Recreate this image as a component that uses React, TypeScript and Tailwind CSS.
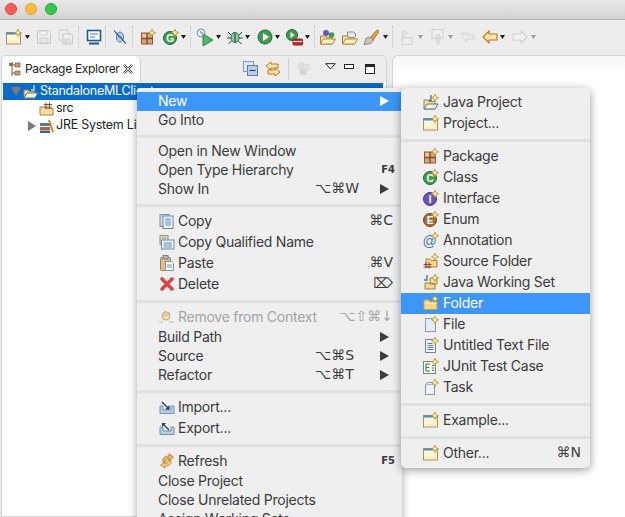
import type { ReactNode } from "react";

const Svg = ({ children, w = 16, h = 16 }: { children: ReactNode; w?: number; h?: number }) => (
  <svg width={w} height={h} viewBox={`0 0 ${w} ${h}`} className="shrink-0 block">
    {children}
  </svg>
);

// little yellow "new" sparkle in the top right of most icons
const Spark = ({ x = 12, y = 3.8 }: { x?: number; y?: number }) => (
  <path
    d={`M${x} ${y - 3.6}l1.1 2.5 2.5 1.1-2.5 1.1-1.1 2.5-1.1-2.5-2.5-1.1 2.5-1.1z`}
    fill="#fff0a8"
    stroke="#b98a24"
    strokeWidth="0.8"
  />
);

const WindowNew = () => (
  <Svg>
    <rect x="0.5" y="3.5" width="14" height="11.5" fill="#fdf6d6" stroke="#a9925c" />
    <rect x="0.5" y="3.5" width="14" height="2" fill="#4f8cc4" />
    <path d="M3 13h10V7" stroke="#f3e4a2" fill="none" />
    <Spark />
  </Svg>
);
const JavaProject = () => (
  <Svg>
    <path d="M1 15V6h4l1 1.5h6V15z" fill="#f8dfa0" stroke="#a9803a" />
    <path d="M1 15l3-5h11l-3 5z" fill="#fdf1c8" stroke="#3f78b5" />
    <path d="M8 1v5.5H5.5" fill="none" stroke="#3f78b5" strokeWidth="1.4" />
    <Spark />
  </Svg>
);
const PackageIcon = () => (
  <Svg>
    <rect x="1.5" y="4" width="11" height="11" fill="#d9a679" stroke="#8f5b3a" />
    <path d="M7 4v11M1.5 9.5h11" stroke="#7d4a2b" strokeWidth="1.3" />
    <path d="M2.5 5h3.5v3.5H2.5z" fill="#eccba6" />
    <Spark />
  </Svg>
);
const Circle = ({ c, s, l }: { c: string; s: string; l: string }) => (
  <Svg>
    <circle cx="7" cy="9" r="6.5" fill={c} stroke={s} />
    <text x="7" y="12.6" textAnchor="middle" fontSize="10" fontWeight="700" fill="#fff" fontFamily="Liberation Sans, sans-serif">
      {l}
    </text>
    <Spark />
  </Svg>
);
const Annotation = () => (
  <Svg>
    <text x="6.5" y="13.5" textAnchor="middle" fontSize="14" fill="#3d78b2" fontFamily="Liberation Sans, sans-serif">
      @
    </text>
    <Spark />
  </Svg>
);
const SourceFolder = () => (
  <Svg>
    <path d="M3 14V6h4l1 1.5h6V14z" fill="#f5d590" stroke="#a9803a" />
    <path d="M0.5 11.5h8M0.5 14h8M3 9v6.5M6 9v6.5" stroke="#8f4a3a" fill="none" />
    <Spark />
  </Svg>
);
const WorkingSet = () => (
  <Svg>
    <path d="M4 1v5H1" fill="none" stroke="#3f78b5" strokeWidth="1.4" />
    <path d="M7 9V4h4l1 1h2v5z" fill="#f8dfa0" stroke="#a9803a" />
    <path d="M2 15V9h4l1 1h5v5z" fill="#f5d590" stroke="#a9803a" />
    <Spark />
  </Svg>
);
const FolderNew = () => (
  <Svg>
    <path d="M1 14.5V5h5l1 1.5h7v8z" fill="#f8d98b" stroke="#c79a3f" />
    <path d="M1.5 8.5h12" stroke="#fdeebb" />
    <Spark />
  </Svg>
);
const FileNew = () => (
  <Svg>
    <path d="M2.5 2.5h7l3 3v10h-10z" fill="#e4edf7" stroke="#8a9cb2" />
    <Spark />
  </Svg>
);
const TextNew = () => (
  <Svg>
    <path d="M2.5 2.5h7l3 3v10h-10z" fill="#f2f5fa" stroke="#7a7f88" />
    <path d="M4.5 6.5h5M4.5 8.5h6M4.5 10.5h6M4.5 12.5h6" stroke="#4f7fc0" />
    <Spark />
  </Svg>
);
const JUnit = () => (
  <Svg>
    <rect x="0.5" y="3.5" width="12" height="12" fill="#f4f7f2" stroke="#6f8f70" />
    <path d="M3 6v7h4M3 9.5h3M3 6h4M9 7.5h2M9 10h2M9 12.5h2" stroke="#2f7d4a" fill="none" />
    <Spark />
  </Svg>
);
const TaskNew = () => (
  <Svg>
    <path d="M2.5 5.5l2-2h7v12h-9z" fill="#eef3f9" stroke="#8a94a2" />
    <path d="M2.5 5.5h9" stroke="#aab4c2" />
    <Spark />
  </Svg>
);
const CopyIcon = () => (
  <Svg>
    <rect x="1" y="1.5" width="9" height="12" fill="#cfdcea" stroke="#7d8ea3" />
    <rect x="4" y="3" width="10" height="12.5" fill="#f3f7fb" stroke="#6f86a3" />
    <path d="M6 6h6M6 8h6M6 10h6M6 12h6" stroke="#5a8fc7" />
  </Svg>
);
const CopyQualified = () => (
  <Svg>
    <rect x="1" y="1.5" width="8" height="9" fill="#e6dcc0" stroke="#9a8f70" />
    <rect x="2.5" y="6" width="12.5" height="9" fill="#f3f7fb" stroke="#6f86a3" />
    <path d="M4.5 9h8.5M4.5 11h8.5M4.5 13h8.5" stroke="#5a8fc7" />
    <path d="M3 4h4" stroke="#5a8fc7" />
  </Svg>
);
const PasteIcon = () => (
  <Svg>
    <rect x="1.5" y="2.5" width="10" height="13" rx="1" fill="#e5bd82" stroke="#a57f49" />
    <rect x="4" y="0.5" width="5" height="3.5" fill="#b6bcc4" stroke="#7a808a" />
    <path d="M6.5 6.5h6l2 2v7h-8z" fill="#fff" stroke="#7d8ea3" />
    <path d="M8 10h5M8 12h5" stroke="#5a8fc7" />
  </Svg>
);
const DeleteIcon = () => (
  <Svg>
    <path d="M3 3l10 10M13 3L3 13" stroke="#dd4343" strokeWidth="3.6" strokeLinecap="round" />
  </Svg>
);
const RemoveContext = () => (
  <Svg>
    <path d="M0 13h4M10 13h5" stroke="#bbb" />
    <circle cx="7" cy="7" r="4" fill="#f3dfae" stroke="#c8aa6d" />
    <path d="M6 2l4 3-4 2z" fill="#f7ebc9" stroke="#c8aa6d" />
  </Svg>
);
const ImportIcon = ({ out = false }: { out?: boolean }) => (
  <Svg>
    <path d="M1 7v7.5h14V7h-3v4H4V7z" fill="#b8cfe6" stroke="#6f93bb" />
    <path d={out ? "M10 10L3.5 3.5" : "M3 3l7 7"} stroke="#1f3f66" strokeWidth="1.2" />
    <path d={out ? "M3 7V3h4z" : "M10.5 6v4.5H6z"} fill="#1f3f66" />
  </Svg>
);
const RefreshIcon = () => (
  <Svg>
    <path d="M4 9c-1-4 2-6 6-6V0.8L14.5 4 10 7.5V5.5c-2 0-3 1-3 3z" fill="#eeb34a" stroke="#a8742a" strokeWidth="0.7" />
    <path d="M12 7c1 4-2 6-6 6v2.2L1.5 12 6 8.5v2c2 0 3-1 3-3z" fill="#f2c873" stroke="#a8742a" strokeWidth="0.7" />
  </Svg>
);

// toolbar bits
const Caret = ({ dim = false }: { dim?: boolean }) => (
  <svg width="5" height="4" viewBox="0 0 5 4" className="shrink-0">
    <path d="M0 0h5L2.5 4z" fill={dim ? "#9a9a9a" : "#1a1a1a"} />
  </svg>
);
const TbSep = () => <div className="h-[22px] w-[1px] shrink-0 border-l border-dotted border-[#c4c4c4]" />;

const SaveIcon = () => (
  <Svg>
    <path d="M1.5 1.5h11l2 2v11h-13z" fill="#f0f0f0" stroke="#c6c6c6" />
    <rect x="4" y="2" width="7" height="4" fill="#f7f7f7" stroke="#d0d0d0" />
    <rect x="4" y="9" width="8" height="5" fill="#e8e8e8" stroke="#cdcdcd" />
  </Svg>
);
const SaveAll = () => (
  <Svg>
    <path d="M1 1h9v10H1z" fill="#eee" stroke="#ccc" />
    <path d="M5 5h8.5l1 1v9H5z" fill="#eee" stroke="#c6c6c6" />
    <rect x="7" y="10" width="5" height="4" fill="#e4e4e4" stroke="#cdcdcd" />
  </Svg>
);
const Monitor = () => (
  <Svg>
    <rect x="1.5" y="1.5" width="13" height="10" fill="#fff" stroke="#1e5a96" strokeWidth="1.6" />
    <path d="M4 5h8M4 8h5" stroke="#3f7fb8" />
    <path d="M3 14.5h10" stroke="#1e5a96" strokeWidth="2" />
  </Svg>
);
const MarkIcon = () => (
  <Svg>
    <ellipse cx="7" cy="8" rx="3.6" ry="5" fill="#b7cfe6" stroke="#4d7ba8" />
    <path d="M1 1.5l12 13" stroke="#1f3f66" strokeWidth="1.1" />
    <path d="M5 8h4" stroke="#4d7ba8" />
  </Svg>
);
const RunHistory = () => (
  <svg width="18" height="18" viewBox="0 0 18 18" className="shrink-0">
    <circle cx="5" cy="5" r="4" fill="#eef4fa" stroke="#6a8fb3" />
    <path d="M5 3v2h2" stroke="#4d7ba8" fill="none" />
    <path d="M7 6l10 6-10 6z" fill="#58b368" stroke="#2f8545" />
  </svg>
);
const BugIcon = () => (
  <Svg>
    <ellipse cx="8" cy="8.5" rx="4" ry="5" fill="#8cc9a0" stroke="#2f6d48" />
    <path d="M8 4v9M1 3l3 3M15 3l-3 3M0.5 9h3.5M15.5 9H12M1.5 15l3-3M14.5 15l-3-3" stroke="#1f3d2c" />
  </Svg>
);
const RunIcon = () => (
  <Svg>
    <circle cx="8" cy="8" r="7" fill="#3c9d4e" stroke="#1d6b30" />
    <path d="M6 4l6 4-6 4z" fill="#fff" />
  </Svg>
);
const ExtTools = () => (
  <svg width="17" height="17" viewBox="0 0 17 17" className="shrink-0">
    <circle cx="6" cy="6" r="5.5" fill="#3c9d4e" stroke="#1d6b30" />
    <path d="M4.5 3l4 3-4 3z" fill="#fff" />
    <rect x="7" y="10" width="9.5" height="6" rx="1" fill="#d8282d" stroke="#9c1418" />
    <path d="M7 12.5h9.5" stroke="#fff" />
  </svg>
);
const OpenFolderA = () => (
  <Svg>
    <circle cx="6" cy="4" r="3" fill="#6a57b5" />
    <circle cx="11.5" cy="6" r="2.8" fill="#3f9a59" />
    <path d="M0.5 15V7h5l1 1.5h6V15z" fill="#f8dfa0" stroke="#a9803a" />
    <path d="M0.5 15l3-5h12l-3 5z" fill="#fdf1c8" stroke="#b8862e" />
  </Svg>
);
const OpenFolderB = () => (
  <Svg>
    <path d="M5.5 8V3h6l2 2v3" fill="#dfe7f0" stroke="#7d8ea3" />
    <path d="M0.5 15V7h5l1 1.5h6V15z" fill="#f8dfa0" stroke="#a9803a" />
    <path d="M0.5 15l3-5h12l-3 5z" fill="#fdf1c8" stroke="#b8862e" />
  </Svg>
);
const Brush = () => (
  <Svg>
    <path d="M7 9l7-8 2 1.5-6 8.5z" fill="#e9a93f" stroke="#a07020" />
    <path d="M7 8l3.5 3-2.5 3.5-7 1 2-6z" fill="#c9c4b5" stroke="#888" />
  </Svg>
);
const PrevAnno = () => (
  <Svg>
    <path d="M4 1v8h4" stroke="#d2d2d2" fill="none" strokeWidth="1.5" />
    <path d="M7 1l3 3H8v2H6V4H4z" fill="#ddd" />
    <rect x="3" y="9" width="10" height="6.5" fill="#eee" stroke="#d0d0d0" />
  </Svg>
);
const NextAnno = () => (
  <Svg>
    <rect x="2" y="0.5" width="11" height="9" fill="#eee" stroke="#d0d0d0" />
    <path d="M7 15V8H5l3-3 3 3H9v7z" fill="#e6e6e6" stroke="#cfcfcf" />
  </Svg>
);
const Arrow = ({ fill, stroke, flip = false }: { fill: string; stroke: string; flip?: boolean }) => (
  <Svg>
    <path
      d={flip ? "M9 2l6 6-6 6v-3H1V5h8z" : "M7 2L1 8l6 6v-3h8V5H7z"}
      fill={fill}
      stroke={stroke}
      strokeWidth="1.1"
    />
  </Svg>
);
const GhostBack = () => (
  <Svg>
    <path d="M8 3L3 8l5 5v-3h7V6H8z" fill="#ececec" stroke="#d4d4d4" />
    <path d="M3 2.5l.6 1.4 1.4.6-1.4.6L3 6.5l-.6-1.4L1 4.5l1.4-.6z" fill="#cfcfcf" />
  </Svg>
);

const Sep = () => <div className="h-[3px] bg-[#e0e0e0] my-[4.5px]" />;

const Triangle = ({ color = "#3b3b3b" }: { color?: string }) => (
  <svg width="9" height="10" viewBox="0 0 9 10" className="shrink-0">
    <path d="M0 0l9 5-9 5z" fill={color} />
  </svg>
);

type RowProps = {
  label: string;
  icon?: ReactNode;
  keys?: string;
  sub?: boolean;
  active?: boolean;
  dim?: boolean;
  small?: boolean;
  tall?: boolean;
};

function Row({ label, icon, keys, sub, active, dim, small, tall }: RowProps) {
  const text = active ? "text-white" : dim ? "text-[#a4a4a4]" : "text-[#3b3b3b]";
  return (
    <div className={`flex items-center ${tall ? "h-[21px]" : "h-[19px]"} ${active ? "bg-[#3d97fa]" : ""} pl-[21px] pb-[2px] ${sub ? "pr-[13px]" : "pr-[9px]"} ${text}`}>
      {icon && <div className="w-[20px] shrink-0 pl-[1px]">{icon}</div>}
      <span className="whitespace-nowrap">{label}</span>
      <div className="flex-1" />
      {keys && (
        <span className={`whitespace-nowrap font-['DejaVu_Sans',sans-serif] tracking-normal ${small ? "text-[10px] font-semibold -mr-[2px]" : "text-[14px]"} ${sub ? "w-[41px]" : ""}`}>{keys}</span>
      )}
      {sub && (
        <div className={keys ? "ml-[24px]" : ""}>
          <Triangle color={active ? "#ffffff" : "#3b3b3b"} />
        </div>
      )}
    </div>
  );
}

function SubRow({ label, icon, keys, active }: { label: string; icon: ReactNode; keys?: string; active?: boolean }) {
  return (
    <div className={`flex items-center h-[21px] pl-[22px] pr-[9px] pb-[2px] ${active ? "bg-[#3d97fa] text-white" : "text-[#3b3b3b]"}`}>
      <div className="w-[20px] shrink-0">{icon}</div>
      <span className="whitespace-nowrap">{label}</span>
      <div className="flex-1" />
      {keys && <span className="font-['DejaVu_Sans',sans-serif] tracking-normal text-[14px]">{keys}</span>}
    </div>
  );
}

export default function App() {
  return (
    <div className="relative w-[625px] h-[517px] overflow-hidden bg-[#ededed] font-['Inter',sans-serif] text-[14px] tracking-[-0.25px] flex flex-col">
      {/* title bar */}
      <div className="h-[20px] shrink-0 bg-gradient-to-b from-[#e9e9e9] to-[#d2d2d2] border-b border-[#b4b4b4] flex items-start gap-[8px] pl-[5px] pt-[3px]">
        <div className="w-[12px] h-[12px] rounded-full bg-[#fc5b57] border border-[#e0443e]" />
        <div className="w-[12px] h-[12px] rounded-full bg-[#fdbc40] border border-[#dfa123]" />
        <div className="w-[12px] h-[12px] rounded-full bg-[#34c84a] border border-[#1aab29]" />
      </div>

      {/* toolbar */}
      <div className="h-[35px] shrink-0 flex items-center pl-[6px] pb-[1px]">
        <WindowNew />
        <div className="w-[3px]" />
        <Caret />
        <div className="w-[6px]" />
        <SaveIcon />
        <div className="w-[6px]" />
        <SaveAll />
        <div className="w-[4px]" />
        <TbSep />
        <div className="w-[7px]" />
        <Monitor />
        <div className="w-[3px]" />
        <TbSep />
        <div className="w-[7px]" />
        <MarkIcon />
        <div className="w-[3px]" />
        <TbSep />
        <div className="w-[7px]" />
        <PackageIcon />
        <div className="w-[7px]" />
        <Circle c="#3c9d4e" s="#1d6b30" l="G" />
        <div className="w-[2px]" />
        <Caret />
        <div className="w-[4px]" />
        <TbSep />
        <div className="w-[5px]" />
        <RunHistory />
        <div className="w-[2px]" />
        <Caret />
        <div className="w-[6px]" />
        <BugIcon />
        <div className="w-[2px]" />
        <Caret />
        <div className="w-[7px]" />
        <RunIcon />
        <div className="w-[2px]" />
        <Caret />
        <div className="w-[6px]" />
        <ExtTools />
        <div className="w-[2px]" />
        <Caret />
        <div className="w-[4px]" />
        <TbSep />
        <div className="w-[5px]" />
        <OpenFolderA />
        <div className="w-[6px]" />
        <OpenFolderB />
        <div className="w-[5px]" />
        <Brush />
        <div className="w-[4px]" />
        <Caret />
        <div className="w-[4px]" />
        <TbSep />
        <div className="w-[6px]" />
        <PrevAnno />
        <div className="w-[3px]" />
        <Caret dim />
        <div className="w-[7px]" />
        <NextAnno />
        <div className="w-[2px]" />
        <Caret dim />
        <div className="w-[6px]" />
        <GhostBack />
        <div className="w-[7px]" />
        <Arrow fill="#fbe7a6" stroke="#b9771d" />
        <div className="w-[2px]" />
        <Caret />
        <div className="w-[7px]" />
        <Arrow fill="#f2f2f2" stroke="#cfcfcf" flip />
        <div className="w-[3px]" />
        <Caret dim />
      </div>

      {/* workbench */}
      <div className="flex-1 flex pl-[1px] gap-[5px] min-h-0">
        <div className="w-[386px] shrink-0 flex flex-col border border-[#d4d4d4] rounded-t-[6px] bg-white overflow-hidden">
          <div className="h-[26px] shrink-0 bg-[#ededed] flex items-stretch">
            <div className="w-[139px] shrink-0 bg-white border-r border-[#cfcfcf] rounded-tr-[6px] flex items-center pl-[7px]">
              <Svg w={12} h={14}>
                <path d="M3 0v14M3 3h3M3 11h3" stroke="#6b5a48" fill="none" />
                <rect x="0" y="1" width="4" height="3" fill="#8f6f52" />
                <rect x="6" y="1" width="5" height="4" fill="#c99a70" stroke="#6b4a30" strokeWidth="0.6" />
                <rect x="6" y="9" width="5" height="4" fill="#c99a70" stroke="#6b4a30" strokeWidth="0.6" />
              </Svg>
              <span className="ml-[4px] w-[91px] text-[12px] tracking-[-0.3px] text-[#222] whitespace-nowrap">Package Explorer</span>
              <svg width="10" height="10" viewBox="0 0 10 10" className="ml-[7px] shrink-0">
                <path d="M1 1l8 8M9 1L1 9" stroke="#333" strokeWidth="2.2" />
                <path d="M1 1l8 8M9 1L1 9" stroke="#fff" strokeWidth="0.9" />
              </svg>
            </div>
            <div className="flex items-center pl-[102px]">
              <Svg>
                <rect x="0.5" y="0.5" width="10" height="10" fill="#dfe7f0" stroke="#8a9bb0" />
                <rect x="4.5" y="4.5" width="10" height="10" fill="#b8cfe6" stroke="#5a7fa6" />
                <path d="M6.5 9.5h6" stroke="#1f3f66" strokeWidth="1.2" />
              </Svg>
              <div className="w-[6px]" />
              <Svg>
                <path d="M6 1L1 5l5 4V7h7V3H6z" fill="#fbe7a6" stroke="#b9771d" />
                <path d="M10 7l5 4-5 4v-2H3V9h7z" fill="#fbe7a6" stroke="#b9771d" />
              </Svg>
              <div className="h-[22px] border-l border-[#d0d0d0] mx-[7px]" />
              <Svg>
                <circle cx="5" cy="5" r="3.5" fill="#dcdcdc" />
                <circle cx="11" cy="6" r="3.5" fill="#e0e0e0" />
                <circle cx="7" cy="11" r="3.5" fill="#d4d4d4" />
              </Svg>
              <div className="w-[13px]" />
              <svg width="11" height="7" viewBox="0 0 11 7" className="mb-[6px] shrink-0">
                <path d="M0.7 0.7h9.6L5.5 6z" fill="#fff" stroke="#222" />
              </svg>
              <div className="w-[8px]" />
              <div className="w-[10px] h-[5px] border border-[#222] bg-white mb-[6px]" />
              <div className="w-[11px]" />
              <div className="w-[10px] h-[10px] border border-[#222] border-t-[3px] bg-white" />
            </div>
          </div>
          {/* tree */}
          <div className="pt-[1px] text-[#222] text-[12.5px]">
            <div className="h-[17px] ml-[1px] mr-[3px] bg-[#0a6bcb] text-white flex items-center pl-[8px] gap-[2px]">
              <svg width="10" height="9" viewBox="0 0 10 9" className="shrink-0">
                <path d="M0 0h10L5 9z" fill="#7b7b7b" />
              </svg>
              <Svg>
                <path d="M1 14V6h4l1 1.5h6V14z" fill="#f8dfa0" stroke="#a9803a" />
                <path d="M1 14l3-5h11l-3 5z" fill="#fdf1c8" stroke="#3f78b5" />
                <path d="M11 1v5H8" fill="none" stroke="#bcd6f2" strokeWidth="1.4" />
              </Svg>
              <span className="whitespace-nowrap -ml-[1px]">StandaloneMLClient</span>
            </div>
            <div className="h-[17px] flex items-center pl-[37px] gap-[1px]">
              <Svg>
                <path d="M1 14V6h4l1 1.5h8V14z" fill="#f8dfa0" stroke="#a9803a" />
                <path d="M5 3.5h8M5 6h8M7 1.5V8M10.5 1.5V8" stroke="#8f4a3a" fill="none" />
              </Svg>
              <span>src</span>
            </div>
            <div className="h-[17px] flex items-center pl-[26px] gap-[1px]">
              <svg width="8" height="10" viewBox="0 0 8 10" className="shrink-0 mr-[2px]">
                <path d="M0 0l8 5-8 5z" fill="#7b7b7b" />
              </svg>
              <Svg>
                <rect x="1" y="5" width="10" height="3" fill="#3b8a8f" />
                <rect x="1" y="9" width="10" height="3" fill="#c45a3a" />
                <rect x="1" y="12.5" width="10" height="2.5" fill="#2f6f9f" />
                <path d="M10 2l4 12" stroke="#c98a30" strokeWidth="2" />
              </Svg>
              <span className="whitespace-nowrap">JRE System Library</span>
            </div>
          </div>
        </div>
        <div className="flex-1 border-l border-t border-[#d4d4d4] rounded-tl-[6px] bg-gradient-to-b from-[#f6f6f6] to-white to-[20px]" />
      </div>

      {/* context menu */}
      <div className="absolute left-[137px] top-[88px] w-[265px] h-[440px] bg-[#efefef] rounded-t-[5px] shadow-[0_2px_10px_rgba(0,0,0,0.35)] pt-[4px]">
        <Row label="New" sub active />
        <Row label="Go Into" />
        <Sep />
        <Row label="Open in New Window" />
        <Row label="Open Type Hierarchy" keys="F4" small />
        <Row label="Show In" keys="⌥⌘W" sub />
        <Sep />
        <Row label="Copy" icon={<CopyIcon />} keys="⌘C" tall />
        <Row label="Copy Qualified Name" icon={<CopyQualified />} tall />
        <Row label="Paste" icon={<PasteIcon />} keys="⌘V" tall />
        <Row label="Delete" icon={<DeleteIcon />} keys="⌦" tall />
        <Sep />
        <Row label="Remove from Context" icon={<RemoveContext />} keys="⌥⇧⌘↓" dim tall />
        <Row label="Build Path" sub />
        <Row label="Source" keys="⌥⌘S" sub />
        <Row label="Refactor" keys="⌥⌘T" sub />
        <Sep />
        <Row label="Import..." icon={<ImportIcon />} tall />
        <Row label="Export..." icon={<ImportIcon out />} tall />
        <Sep />
        <Row label="Refresh" icon={<RefreshIcon />} keys="F5" small tall />
        <Row label="Close Project" />
        <Row label="Close Unrelated Projects" />
        <Row label="Assign Working Sets..." />
      </div>

      {/* New submenu */}
      <div className="absolute left-[401px] top-[88px] w-[189px] h-[380px] bg-[#efefef] rounded-[5px] shadow-[0_2px_10px_rgba(0,0,0,0.4)] pt-[4px]">
        <SubRow label="Java Project" icon={<JavaProject />} />
        <SubRow label="Project..." icon={<WindowNew />} />
        <Sep />
        <SubRow label="Package" icon={<PackageIcon />} />
        <SubRow label="Class" icon={<Circle c="#3c9d4e" s="#1d6b30" l="C" />} />
        <SubRow label="Interface" icon={<Circle c="#6a57b5" s="#3f3488" l="I" />} />
        <SubRow label="Enum" icon={<Circle c="#a3693a" s="#6f4322" l="E" />} />
        <SubRow label="Annotation" icon={<Annotation />} />
        <SubRow label="Source Folder" icon={<SourceFolder />} />
        <SubRow label="Java Working Set" icon={<WorkingSet />} />
        <SubRow label="Folder" icon={<FolderNew />} active />
        <SubRow label="File" icon={<FileNew />} />
        <SubRow label="Untitled Text File" icon={<TextNew />} />
        <SubRow label="JUnit Test Case" icon={<JUnit />} />
        <SubRow label="Task" icon={<TaskNew />} />
        <Sep />
        <SubRow label="Example..." icon={<WindowNew />} />
        <Sep />
        <SubRow label="Other..." icon={<WindowNew />} keys="⌘N" />
      </div>
    </div>
  );
}
